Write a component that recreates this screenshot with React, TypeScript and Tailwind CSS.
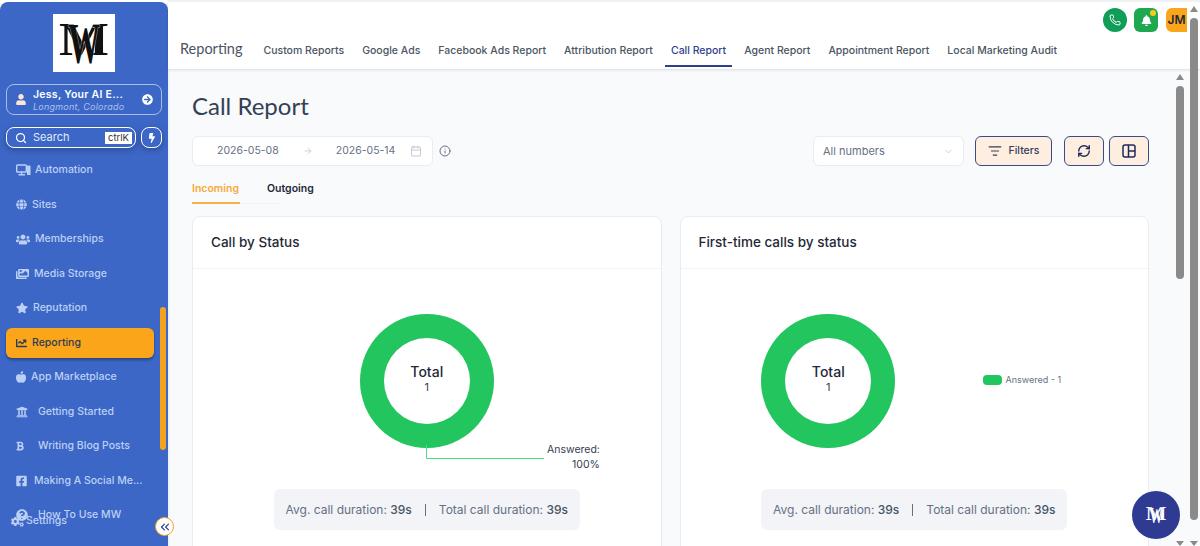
import type { ReactNode } from 'react';
import { Search, Phone, ChevronDown, ArrowRight, Calendar, Info, ListFilter, RefreshCw, ChevronsLeft } from 'lucide-react';
import {
  FaUser, FaArrowCircleRight, FaBolt, FaGlobe, FaUsers, FaStar, FaChartLine, FaAppleAlt,
  FaUniversity, FaBold, FaFacebookSquare, FaQuestionCircle, FaCogs, FaBell, FaImages,
} from 'react-icons/fa';

function DevicesIcon() {
  return (
    <svg viewBox="0 0 15 12" className="h-[12px] w-[15px]" fill="none" stroke="currentColor">
      <rect x="0.7" y="1" width="9.6" height="7" rx="0.8" strokeWidth="1.4" />
      <path d="M2.5 10.8H9M5.5 8v2.5" strokeWidth="1.4" />
      <rect x="11" y="1.5" width="3.5" height="9.5" rx="0.6" fill="currentColor" stroke="none" />
    </svg>
  );
}

const navItems: { label: string; icon: ReactNode; gap: string }[] = [
  { label: 'Automation', icon: <DevicesIcon />, gap: 'gap-[4px]' },
  { label: 'Sites', icon: <FaGlobe className="h-[11px] w-[11px]" />, gap: 'gap-[5px]' },
  { label: 'Memberships', icon: <FaUsers className="h-[13px] w-[14px]" />, gap: 'gap-[5px]' },
  { label: 'Media Storage', icon: <FaImages className="h-[12px] w-[13px]" />, gap: 'gap-[5px]' },
  { label: 'Reputation', icon: <FaStar className="h-[12px] w-[12px]" />, gap: 'gap-[5px]' },
  { label: 'Reporting', icon: <FaChartLine className="h-[12px] w-[11px]" />, gap: 'gap-[5px]' },
  { label: 'App Marketplace', icon: <FaAppleAlt className="h-[12px] w-[10px]" />, gap: 'gap-[5px]' },
  { label: 'Getting Started', icon: <FaUniversity className="h-[12px] w-[12px]" />, gap: 'gap-[10px]' },
  { label: 'Writing Blog Posts', icon: <FaBold className="h-[10px] w-[8px]" />, gap: 'gap-[14px]' },
  { label: 'Making A Social Me...', icon: <FaFacebookSquare className="h-[12px] w-[11px]" />, gap: 'gap-[7px]' },
  { label: 'How To Use MW', icon: <FaQuestionCircle className="h-[12px] w-[12px]" />, gap: 'gap-[10px]' },
];

const tabs = ['Custom Reports', 'Google Ads', 'Facebook Ads Report', 'Attribution Report', 'Call Report', 'Agent Report', 'Appointment Report', 'Local Marketing Audit'];

function MwLogo({ color, slit, className }: { color: string; slit: string; className: string }) {
  return (
    <svg viewBox="0 0 62 58" className={className}>
      <text x="31" y="41" fontFamily="Liberation Serif, serif" fontWeight="700" fontSize="47" fill={color} textAnchor="middle" textLength="50" lengthAdjust="spacingAndGlyphs">M</text>
      <text x="31" y="49" fontFamily="Liberation Serif, serif" fontWeight="700" fontSize="56" fill={color} stroke={slit} strokeWidth="0.8" paintOrder="stroke" textAnchor="middle" textLength="32" lengthAdjust="spacingAndGlyphs">W</text>
    </svg>
  );
}

function Sidebar() {
  return (
    <aside className="relative mt-[2px] flex h-[544px] w-[168px] shrink-0 flex-col overflow-hidden rounded-tr-lg rounded-tl-lg bg-[#3c67c7] font-['Inter',sans-serif]">
      <div className="mt-[12px] flex justify-center">
        <div className="flex h-[58px] w-[62px] items-center justify-center bg-white">
          <MwLogo color="#111" slit="#fff" className="h-[58px] w-[62px]" />
        </div>
      </div>

      <div className="mx-[6px] mt-[12px] flex h-[31px] items-center rounded-lg border border-[#a9bde9] pl-[9px] pr-[8px]">
        <FaUser className="h-[11px] w-[10px] text-[#fbe6d3]" />
        <div className="ml-[7px] min-w-0 flex-1 pt-[1px] leading-none">
          <div className="text-[10.5px] font-semibold leading-[12px] tracking-wide text-white">Jess, Your AI E...</div>
          <div className="text-[9px] italic leading-[11px] tracking-wide text-[#a9c0f0]">Longmont, Colorado</div>
        </div>
        <FaArrowCircleRight className="h-[11px] w-[11px] text-white" />
      </div>

      <div className="mx-[6px] mt-[12px] flex gap-[5px]">
        <div className="flex h-[21px] flex-1 items-center rounded-lg border border-white pl-[8px] pr-[3px] shadow-[0_2px_6px_rgba(0,0,0,0.25)]">
          <Search className="h-[12px] w-[12px] text-white" strokeWidth={2.5} />
          <span className="ml-[6px] flex-1 text-[11px] text-[#e3eafb]">Search</span>
          <span className="bg-white px-[3px] text-[9.5px] leading-[12px] text-[#333]">ctrlK</span>
        </div>
        <div className="flex h-[21px] w-[21px] items-center justify-center rounded-lg border border-white shadow-[0_2px_6px_rgba(0,0,0,0.25)]">
          <FaBolt className="h-[10px] w-[10px] text-white" />
        </div>
      </div>

      <nav className="mt-[7px] flex flex-col">
        {navItems.map((item) => {
          const active = item.label === 'Reporting';
          return (
            <div
              key={item.label}
              className={`ml-[6px] mr-[14px] mb-[4.5px] flex h-[30px] items-center pl-[10px] text-[10.5px] font-medium ${item.gap} ${active ? 'rounded-md bg-[#fba61a] text-[#2d3a55] shadow-[0_2px_3px_rgba(0,0,0,0.35)]' : 'text-[#bcd0f5]'}`}
            >
              {item.icon}
              <span className="whitespace-nowrap">{item.label}</span>
            </div>
          );
        })}
      </nav>

      <div className="absolute bottom-[17px] left-[11px] flex items-center gap-[2px] text-[10.5px] font-medium text-[#bcd0f5]">
        <FaCogs className="h-[11px] w-[13px]" />
        <span>Settings</span>
      </div>
      <div className="absolute right-[2px] top-[305px] h-[143px] w-[6px] rounded-full bg-[#f2a31f]" />
    </aside>
  );
}

function Donut() {
  return (
    <div className="flex h-[134px] w-[134px] items-center justify-center rounded-full bg-[#22c55e]">
      <div className="flex h-[86px] w-[86px] flex-col items-center justify-center rounded-full bg-white pb-[5px] text-[#1f2937]">
        <span className="text-[14px] font-medium leading-[18px]">Total</span>
        <span className="text-[11px] leading-[13px] text-[#374151]">1</span>
      </div>
    </div>
  );
}

function Duration() {
  return (
    <div className="flex h-[41px] items-center rounded-md bg-[#f2f4f7] px-[12px] text-[12px] text-[#667085]">
      <span>Avg. call duration: <span className="font-medium text-[#475467]">39s</span></span>
      <span className="mx-[13px] h-[12px] w-px bg-[#667085]" />
      <span>Total call duration: <span className="font-medium text-[#475467]">39s</span></span>
    </div>
  );
}

function Card({ title, children }: { title: string; children: ReactNode }) {
  return (
    <div className="h-[340px] flex-1 rounded-lg border border-[#eaecf0] bg-white">
      <div className="flex h-[52px] items-center border-b border-[#f2f4f7] px-[18px] text-[13.5px] font-medium text-[#1f2937]">{title}</div>
      {children}
    </div>
  );
}

export default function App() {
  return (
    <div className="relative flex h-[546px] w-[1200px] overflow-hidden bg-white font-['Inter',sans-serif]">
      <Sidebar />

      <main className="flex min-w-0 flex-1 flex-col">
        <header className="relative z-10 h-[69px] shrink-0 border-t-2 border-[#f0f1f4] bg-white shadow-[0_1px_3px_rgba(0,0,0,0.12)]">
          <div className="flex justify-end gap-[7px] pr-[13px] pt-[6px]">
            <div className="flex h-[24px] w-[24px] items-center justify-center rounded-full bg-[#0f9d58]">
              <Phone className="h-[12px] w-[12px] text-white" />
            </div>
            <div className="relative flex h-[24px] w-[24px] items-center justify-center rounded-md bg-[#1fa84f]">
              <FaBell className="h-[11px] w-[11px] text-white" />
              <span className="absolute right-[2px] top-[2px] h-[6px] w-[6px] rounded-full bg-[#facc15]" />
            </div>
            <div className="ml-[1px] flex h-[24px] w-[21px] items-center justify-center overflow-hidden rounded-l-md bg-[#fba61a] text-[12px] font-semibold text-[#1f2937]">JM</div>
          </div>
          <div className="mt-[1px] flex h-[34px] items-stretch pl-[12px]">
            <span className="mr-[21px] self-center pb-[2px] font-['Lato',sans-serif] text-[14.5px] text-[#4b5563]">Reporting</span>
            <div className="flex gap-[18px]">
              {tabs.map((t) => (
                <div
                  key={t}
                  className={`flex items-center whitespace-nowrap border-b-2 pt-[3px] text-[10.5px] font-medium ${t === 'Call Report' ? '-mx-[6px] border-[#2f3f8f] px-[6px] text-[#2f3f8f]' : 'border-transparent text-[#4b5563]'}`}
                >
                  {t}
                </div>
              ))}
            </div>
          </div>
        </header>

        <section className="min-h-0 flex-1 border-l-2 border-[#eef2fc] bg-[#f8fafc] pl-[22px] pr-[51px]">
          <h1 className="mt-[22px] font-['Lato',sans-serif] text-[24px] leading-[30px] text-[#344054]">Call Report</h1>

          <div className="mt-[15px] flex items-center">
            <div className="flex h-[30px] w-[241px] items-center rounded-md border border-[#eaecf0] bg-white pl-[24px] pr-[10px] text-[10.5px] text-[#667085]">
              <span>2026-05-08</span>
              <ArrowRight className="ml-[24px] h-[10px] w-[10px] text-[#c4c9d2]" />
              <span className="ml-[23px]">2026-05-14</span>
              <Calendar className="ml-auto h-[12px] w-[12px] text-[#c4c9d2]" />
            </div>
            <Info className="ml-[6px] h-[12px] w-[12px] text-[#667085]" />
            <div className="ml-auto flex h-[30px] w-[151px] items-center justify-between rounded-md border border-[#eaecf0] bg-white pl-[9px] pr-[9px] text-[11px] text-[#667085]">
              <span>All numbers</span>
              <ChevronDown className="h-[11px] w-[11px] text-[#c4c9d2]" />
            </div>
            <div className="ml-[11px] flex h-[30px] w-[77px] items-center justify-center gap-[7px] rounded-md border border-[#3a4a8c] bg-[#fdeee0] text-[10.5px] font-medium text-[#344054]">
              <ListFilter className="h-[14px] w-[14px]" />
              Filters
            </div>
            <div className="ml-[12px] flex h-[30px] w-[40px] items-center justify-center rounded-md border border-[#3a4a8c] bg-[#fdeee0]">
              <RefreshCw className="h-[14px] w-[14px] text-[#1f2a5a]" strokeWidth={2.4} />
            </div>
            <div className="ml-[5px] flex h-[30px] w-[40px] items-center justify-center rounded-md border border-[#3a4a8c] bg-[#fdeee0]">
              <svg viewBox="0 0 14 14" className="h-[14px] w-[14px] text-[#1f2a5a]" fill="none" stroke="currentColor" strokeWidth="1.5">
                <rect x="1" y="1" width="12" height="12" rx="2" />
                <path d="M6.5 1v12M6.5 7H13" />
              </svg>
            </div>
          </div>

          <div className="mt-[9px] flex h-[29px] w-[88px] items-start gap-[27px] border-b border-[#f2f4f7] text-[10.5px] font-semibold">
            <div className="h-[29px] w-[48px] shrink-0 border-b-2 border-[#fbb14b] pt-[6px] text-[#f9a93a]">Incoming</div>
            <div className="pt-[6px] text-[#1f2937]">Outgoing</div>
          </div>

          <div className="mt-[12px] flex gap-[18px]">
            <Card title="Call by Status">
              <div className="relative flex flex-col items-center pt-[45px]">
                <Donut />
                <svg className="absolute left-[233px] top-[176px]" width="120" height="15">
                  <path d="M0.5 0V13.5H118" fill="none" stroke="#4ade80" strokeWidth="1" />
                </svg>
                <div className="absolute left-[354px] top-[173px] text-right text-[10.5px] leading-[15px] text-[#344054]">Answered:<br />100%</div>
                <div className="mt-[41px]"><Duration /></div>
              </div>
            </Card>
            <Card title="First-time calls by status">
              <div className="relative flex flex-col items-center pt-[45px]">
                <div className="mr-[172px]"><Donut /></div>
                <div className="absolute left-[302px] top-[104px] flex items-center gap-[4px] text-[9px] text-[#667085]">
                  <span className="h-[10px] w-[19px] rounded-sm bg-[#22c55e]" />
                  Answered - 1
                </div>
                <div className="mt-[41px]"><Duration /></div>
              </div>
            </Card>
          </div>
        </section>
      </main>

      {/* floating bits over the page */}
      <button className="absolute left-[155px] top-[517px] z-20 flex h-[19px] w-[19px] items-center justify-center rounded-full border border-[#fba61a] bg-white">
        <ChevronsLeft className="h-[14px] w-[14px] text-[#2f3f8f]" />
      </button>
      <div className="absolute left-[1132px] top-[491px] z-20 flex h-[48px] w-[48px] items-center justify-center rounded-full bg-[#2f3a93]">
        <MwLogo color="#fff" slit="#2f3a93" className="h-[24px] w-[26px]" />
      </div>

      {/* scrollbars */}
      <div className="absolute left-[1176px] top-[74px] z-20 h-0 w-0 border-x-[4px] border-b-[6px] border-x-transparent border-b-[#8a8a8a]" />
      <div className="absolute left-[1176px] top-[86px] z-10 h-[193px] w-[8px] rounded-full bg-[#8a8a8a]" />
      <div className="absolute left-[1190px] top-[6px] z-20 h-0 w-0 border-x-[4px] border-b-[6px] border-x-transparent border-b-[#8a8a8a]" />
      <div className="absolute left-[1190px] top-[18px] z-10 h-[502px] w-[8px] rounded-full bg-[#8a8a8a]" />
      <div className="absolute left-[1176px] top-[541px] z-20 h-0 w-0 border-x-[4px] border-t-[5px] border-x-transparent border-t-[#8a8a8a]" />
      <div className="absolute left-[1190px] top-[541px] z-20 h-0 w-0 border-x-[4px] border-t-[5px] border-x-transparent border-t-[#8a8a8a]" />
    </div>
  );
}
